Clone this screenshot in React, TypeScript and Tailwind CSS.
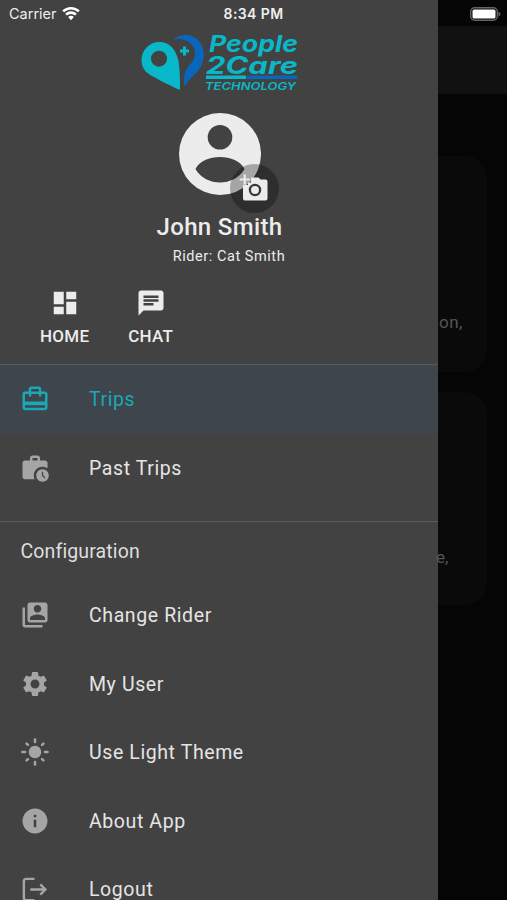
import type { ReactNode } from "react";
import {
  MdCardTravel,
  MdChat,
  MdDashboard,
  MdInfo,
  MdLightMode,
  MdSettings,
  MdSwitchAccount,
  MdWorkHistory,
} from "react-icons/md";

const Logo = () => (
  <svg width="160" height="60" viewBox="0 0 160 60" className="block overflow-visible">
    <path
      d="M41 56 C41 45 41 36 39.500 27C37 15 30 8 20.500 8A18 18 0 0 0 2.500 26C2.500 33 6 38 12 41.500C24 48 32 52 41 56ZM20 16.700a8 8 0 1 1 0 16 8 8 0 0 1 0-16Z"
      fill="#08b8c9"
      fillRule="evenodd"
    />
    <path
      d="M34 5.500C43-1 53 0 59 6C66 13 66.500 23 62 32C58 40 50 44 46 52L45.200 51C44.500 42 46 36 50 31.500C57 25 58 17 53 11C48 5.500 41 4 34 5.500Z"
      fill="#0867bd"
    />
    <path d="M45.500 12.500v9M41 17h9" stroke="#08b8c9" strokeWidth="3" />
    <g fill="#08b8c9" fontFamily="Inter, sans-serif" fontWeight="700" fontStyle="italic">
      <text x="70" y="18" fontSize="22.500" textLength="89" lengthAdjust="spacingAndGlyphs">
        People
      </text>
      <text x="67" y="39.500" fontSize="24" textLength="92" lengthAdjust="spacingAndGlyphs">
        2Care
      </text>
      <text x="66" y="56.300" fontSize="10.800" fontWeight="600" textLength="91" lengthAdjust="spacingAndGlyphs">
        TECHNOLOGY
      </text>
    </g>
    <path d="M67 43.300h40" stroke="#08b8c9" strokeWidth="3.600" />
    <path d="M108 43.300h50" stroke="#0867bd" strokeWidth="3.600" />
  </svg>
);

const Avatar = () => (
  <svg width="82" height="82" viewBox="0 0 82 82" className="block">
    <path
      d="M41 0a41 41 0 1 1 0 82 41 41 0 0 1 0-82ZM41 12a12.300 12.300 0 1 0 0 24.600A12.300 12.300 0 0 0 41 12ZM16.500 56C27 74 55 74 65.500 56C58 40 24 40 16.500 56Z"
      fill="#ececec"
      fillRule="evenodd"
    />
  </svg>
);

const LogoutIcon = () => (
  <svg
    width="29"
    height="29"
    viewBox="0 0 24 24"
    fill="none"
    stroke="currentColor"
    strokeWidth="2"
  >
    <path d="M12 3.200H5.200Q3.200 3.200 3.200 5.200v13.600Q3.200 20.800 5.200 20.800H12M8.500 12H20.500M16.800 7.800l4.200 4.200-4.200 4.200" />
  </svg>
);

const CameraIcon = () => (
  <svg width="30" height="30" viewBox="0 0 30 30">
    <path
      d="M4 12V25.500q0 2 2 2H26.500q2 0 2-2V8.500q0-2-2-2H21.500l-2-2H12v5h-3v2.500Z"
      fill="#ececec"
    />
    <circle cx="16" cy="17" r="5.100" fill="none" stroke="#383838" strokeWidth="2.300" />
    <path d="M5.700 1.500v10M0.700 6.500h10" stroke="#ececec" strokeWidth="2.200" />
  </svg>
);

type ItemProps = { icon: ReactNode; label: string; active?: boolean };

const DrawerItem = ({ icon, label, active }: ItemProps) => (
  <li
    className={`flex h-[68.500px] shrink-0 items-center pl-[20px] ${
      active ? "bg-[#3e454c] text-[#1ba8b5]" : "text-[#a5a5a5]"
    }`}
  >
    <span className="w-[69px]">{icon}</span>
    <span
      className={`pt-[1px] text-[19.500px] tracking-[0.600px] ${active ? "" : "text-[#e5e5e5]"}`}
    >
      {label}
    </span>
  </li>
);

const trips: ItemProps[] = [
  { icon: <MdCardTravel size={30} />, label: "Trips", active: true },
  { icon: <MdWorkHistory size={30} />, label: "Past Trips" },
];

const configuration: ItemProps[] = [
  { icon: <MdSwitchAccount size={30} />, label: "Change Rider" },
  { icon: <MdSettings size={30} />, label: "My User" },
  { icon: <MdLightMode size={30} />, label: "Use Light Theme" },
  { icon: <MdInfo size={30} />, label: "About App" },
  { icon: <LogoutIcon />, label: "Logout" },
];

const StatusBar = () => (
  <div className="absolute inset-x-0 top-0 flex h-[27px] items-center font-[Inter,sans-serif] text-[14px] text-[#eee]">
    <div className="flex flex-1 items-center gap-[5px] pl-[9px]">
      <span className="text-[14.500px]">Carrier</span>
      <svg width="18" height="15" viewBox="0 0 19 15" fill="none" stroke="#fff" strokeWidth="2.700">
        <path d="M1.200 5.200a12 12 0 0 1 16.600 0M4.300 8.700a7.500 7.500 0 0 1 10.400 0" />
        <path d="m9.500 14.500-3-3.200a4.500 4.500 0 0 1 6 0Z" fill="#fff" stroke="none" />
      </svg>
    </div>
    <span className="-ml-[3px] font-semibold tracking-[0.400px]">8:34 PM</span>
    <div className="flex flex-1 justify-end pr-[6px]">
      <svg width="31" height="14" viewBox="0 0 31 14">
        <rect x="0.700" y="0.700" width="26.600" height="12.600" rx="4" fill="none" stroke="#666" strokeWidth="1.400" />
        <rect x="2.500" y="2.500" width="23" height="9" rx="1.500" fill="#fff" />
        <path d="M28.500 4.500q2 1 2 2.500t-2 2.500Z" fill="#666" />
      </svg>
    </div>
  </div>
);

const Drawer = () => (
  <aside className="flex h-full w-[438px] shrink-0 flex-col overflow-hidden bg-[#424242] text-[#ececec]">
    <header className="flex h-[364px] shrink-0 flex-col items-center pt-[34px]">
      <Logo />
      <div className="relative mt-[18.500px] ml-[1px]">
        <Avatar />
        <div className="absolute top-[51px] left-[51px] flex size-[49px] items-center justify-center rounded-full bg-black/30">
          <CameraIcon />
        </div>
      </div>
      <h1 className="mt-[17.500px] ml-[1px] text-[24px] leading-[30px] font-medium tracking-[0.350px]">
        John Smith
      </h1>
      <p className="mt-[6px] pl-[20px] text-[14.500px] leading-[18px] tracking-[0.550px]">
        Rider: Cat Smith
      </p>
      <nav className="mt-[22px] flex w-full gap-[39px] pl-[40px] text-[17px] font-medium tracking-[0.250px]">
        <button className="flex flex-col items-center">
          <MdDashboard size={30} />
          <span className="mt-[6px] leading-[24px]">HOME</span>
        </button>
        <button className="flex flex-col items-center">
          <MdChat size={30} />
          <span className="mt-[6px] leading-[24px]">CHAT</span>
        </button>
      </nav>
    </header>
    <ul className="h-[158px] shrink-0 border-y border-[#5a5a5a]">
      {trips.map((item) => (
        <DrawerItem key={item.label} {...item} />
      ))}
    </ul>
    <h2 className="h-[59px] shrink-0 pt-[18px] pl-[20.500px] text-[19.500px] leading-[24px] tracking-[0.130px] text-[#dedede]">
      Configuration
    </h2>
    <ul>
      {configuration.map((item) => (
        <DrawerItem key={item.label} {...item} />
      ))}
    </ul>
  </aside>
);

const TripsBackdrop = () => (
  <main className="flex min-w-0 flex-1 flex-col bg-[#050505] text-[17px] text-[#555]">
    <div className="mt-[26px] h-[68px] bg-[#111]" />
    <section className="mt-[62px] mr-[20px] h-[216px] rounded-r-[22px] bg-[#0a0a0a] pt-[154px] pl-[1px] tracking-[0.500px]">
      on,
    </section>
    <section className="mt-[20px] mr-[20px] h-[213px] rounded-r-[22px] bg-[#0a0a0a] pt-[153px] -indent-[2px]">
      e,
    </section>
  </main>
);

export default function App() {
  return (
    <div className="relative flex h-[900px] w-[507px] overflow-hidden bg-[#050505] font-[Roboto,sans-serif]">
      <Drawer />
      <TripsBackdrop />
      <StatusBar />
    </div>
  );
}
